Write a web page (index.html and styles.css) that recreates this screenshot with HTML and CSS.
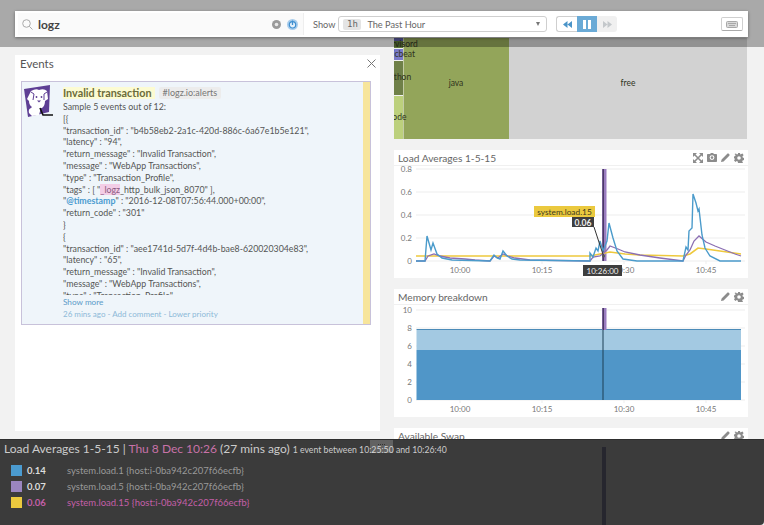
FILE: index.html
```html
<!DOCTYPE html>
<html lang="en">
<head>
  <meta charset="UTF-8" />
  <meta name="viewport" content="width=device-width, initial-scale=1.0"/>
  <title>Events - Load Averages</title>
  <link rel="stylesheet" href="styles.css">
</head>
<body>

  <svg class="defs" width="0" height="0">
    <symbol id="ic-expand" viewBox="0 0 10 10">
      <path d="M1 1l8 8M9 1L1 9" stroke="currentColor" stroke-width="1.6" fill="none"/>
      <path d="M0 0h4L0 4zM10 0v4L6 0zM0 10V6l4 4zM10 10H6l4-4z" fill="currentColor"/>
    </symbol>
    <symbol id="ic-camera" viewBox="0 0 10 9">
      <path fill-rule="evenodd" d="M3 1l1-1h2l1 1h2.2q.8 0 .8.8v6.4q0 .8-.8.8H.8Q0 9 0 8.200V1.800Q0 1 .8 1zM5 2.200a2.400 2.400 0 1 0 0 4.800 2.400 2.400 0 0 0 0-4.800z" fill="currentColor"/>
      <circle cx="5" cy="4.600" r="1.300" fill="currentColor"/>
    </symbol>
    <symbol id="ic-pencil" viewBox="0 0 9 9">
      <path d="M0 9l.6-2.600L6.300.7q.7-.7 1.400 0l.6.6q.7.7 0 1.400L2.600 8.400z" fill="currentColor"/>
    </symbol>
    <symbol id="ic-gear" viewBox="0 0 10 10">
      <path fill-rule="evenodd" d="M4 0h2l.3 1.500 1-.4 1.300-.5 1 1.700-1.100 1 .2 1.200 1.300.5v2l-1.400.4-.4 1 .8 1.300-1.500 1.200-1.200-.9-1 .4L6 10H4l-.3-1.500-1-.4-1.200.9L0 7.600l.8-1.300-.4-1L0 4.900V3.500l1.300-.5.200-1-1-1.100L1.900.6l1.100.8 1-.4zM5 3.200a1.800 1.800 0 1 0 0 3.600 1.800 1.800 0 0 0 0-3.600z" fill="currentColor"/>
    </symbol>
  </svg>

  <div class="page">

    <div class="columns">
      <div class="left-col">
        <div class="events-panel">
          <div class="events-head">
            <span>Events</span>
            <svg class="close-x" width="9" height="9" viewBox="0 0 9 9"><path d="M.5.5l8 8M8.500.5l-8 8" stroke="#777" fill="none"/></svg>
          </div>

          <div class="event-card">
            <svg class="dog-logo" width="32" height="34" viewBox="0 0 32 34">
              <path d="M1 4L27 0l-1 27-21 5z" fill="#5e3f94"/>
              <path d="M8 6q5-3 8-1 5-2 8 1l1 8-3 2q0 5-3 7l-1 0q-1 3-2 7l-7 1-3-3q-1-4 2-5l1-1q-3-2-3-6l-2-2z" fill="#fff"/>
              <path d="M8 7l3 2-1 6M24 7l-3 2 0 6" stroke="#5e3f94" fill="none"/>
              <circle cx="13.500" cy="12" r=".9" fill="#5e3f94"/>
              <circle cx="18.500" cy="12" r=".9" fill="#5e3f94"/>
              <path d="M14 15.500h4l-2 2z" fill="#5e3f94"/>
              <path d="M17 23l3 7h10" stroke="#111" stroke-width="1.600" fill="none"/>
            </svg>
            <div class="event-body">
              <div class="event-title">
                <span class="event-name">Invalid transaction</span>
                <span class="event-tag">#logz.io:alerts</span>
              </div>
              <div class="event-text">
                <div>Sample 5 events out of 12:</div>
                <div>[{</div>
                <div>"transaction_id" : "b4b58eb2-2a1c-420d-886c-6a67e1b5e121",</div>
                <div>"latency" : "94",</div>
                <div>"return_message" : "Invalid Transaction",</div>
                <div>"message" : "WebApp Transactions",</div>
                <div>"type" : "Transaction_Profile",</div>
                <div>"tags" : [ "<mark class="hl-pink">_logz</mark>_http_bulk_json_8070" ],</div>
                <div>"<b class="hl-blue">@timestamp</b>" : "2016-12-08T07:56:44.000+00:00",</div>
                <div>"return_code" : "301"</div>
                <div>}</div>
                <div>{</div>
                <div>"transaction_id" : "aee1741d-5d7f-4d4b-bae8-620020304e83",</div>
                <div>"latency" : "65",</div>
                <div>"return_message" : "Invalid Transaction",</div>
                <div>"message" : "WebApp Transactions",</div>
                <div>"type" : "Transaction_Profile",</div>
              </div>
              <div class="show-more">Show more</div>
              <div class="event-foot">26 mins ago - Add comment - Lower priority</div>
            </div>
            <div class="event-stripe"></div>
          </div>
        </div>
      </div>

      <div class="right-col">
        <svg class="treemap" width="354" height="101" viewBox="394 38 354 101">
          <rect x="394" y="38" width="9" height="3" fill="#5d5da8"/>
          <rect x="394" y="41" width="9" height="7" fill="#5f7a3c"/>
          <rect x="394" y="49" width="9" height="11" fill="#7a7ac8"/>
          <rect x="394" y="61" width="9" height="34" fill="#6f8048"/>
          <rect x="394" y="96" width="9" height="43" fill="#bcd07c"/>
          <rect x="403.500" y="38" width="105.500" height="101" fill="#93a55a"/>
          <rect x="509" y="38" width="238" height="101" fill="#d2d2d2"/>
          <text class="tm-label" x="396" y="47" text-anchor="middle">supervisord</text>
          <text class="tm-label" x="395" y="57" text-anchor="middle">metricbeat</text>
          <text class="tm-label" x="398" y="80" text-anchor="middle">python</text>
          <text class="tm-label" x="397" y="120" text-anchor="middle">node</text>
          <text class="tm-label" x="456" y="86" text-anchor="middle">java</text>
          <text class="tm-label" x="628" y="86" text-anchor="middle">free</text>
        </svg>

        <div class="widget">
          <div class="widget-head">
            <span>Load Averages 1-5-15</span>
            <div class="widget-icons">
              <svg width="10" height="10"><use href="#ic-expand"/></svg>
              <svg width="10" height="9"><use href="#ic-camera"/></svg>
              <svg width="9" height="9"><use href="#ic-pencil"/></svg>
              <svg width="10" height="10"><use href="#ic-gear"/></svg>
            </div>
          </div>
          <svg class="chart" width="354" height="112" viewBox="394 166 354 112">
            <g class="grid">
              <path d="M416 169H745M416 192H745M416 215H745M416 238H745M416 261H745"/>
              <path d="M460 261v3M542 261v3M624 261v3M706 261v3"/>
            </g>
            <text class="tick-y" x="412" y="172">0.8</text>
            <text class="tick-y" x="412" y="195">0.6</text>
            <text class="tick-y" x="412" y="218">0.4</text>
            <text class="tick-y" x="412" y="241">0.2</text>
            <text class="tick-y" x="412" y="264">0</text>
            <text class="tick-x" x="460" y="273">10:00</text>
            <text class="tick-x" x="542" y="273">10:15</text>
            <text class="tick-x" x="624" y="273">10:30</text>
            <text class="tick-x" x="706" y="273">10:45</text>
            <rect class="event-bar" x="602" y="169" width="4.500" height="92"/>
            <rect class="event-core" x="602.500" y="169" width="1.500" height="92"/>
            <polyline class="line-yellow" points="416,256 590,256 600,254 610,252 625,254 640,255 683,256 690,254 698,248 706,249 720,251 741,254"/>
            <polyline class="line-purple" points="416,261 425,261 428,256 434,254 440,256 450,258 465,259 475,260 490,261 494,256 498,258 503,254 508,256 515,258 530,260 590,261 593,257 600,256 607,250 610,246 618,249 625,252 640,255 660,258 683,261 686,255 690,250 694,241 699,236 706,242 715,246 725,250 735,254 741,256"/>
            <polyline class="line-blue" points="416,261 425,261 427,236 431,250 433,243 437,254 442,258 452,260 490,261 494,255 497,258 500,259 503,251 507,256 512,259 520,260 590,261 590,253 593,257 596,248 598,251 600,241 603,251 607,241 609,223 613,238 617,251 623,259 637,261 683,261 686,247 688,250 689,231 692,228 693,194 696,203 698,211 699,209 702,235 705,248 710,256 720,261 741,261"/>
            <path class="pointer" d="M594 227L603.500 256"/>
            <circle class="dot" cx="603.500" cy="256" r="1.500"/>
            <rect class="tip-yellow" x="534" y="206" width="61" height="11"/>
            <text class="tip-yellow-text" x="564.500" y="214.500">system.load.15</text>
            <rect class="tip-dark" x="572" y="217" width="22" height="10"/>
            <text class="tip-dark-text" x="583" y="225.500">0.06</text>
            <rect class="tip-dark" x="583" y="265" width="39" height="11"/>
            <text class="tip-dark-text tip-time" x="602.500" y="274">10:26:00</text>
          </svg>
        </div>

        <div class="widget">
          <div class="widget-head">
            <span>Memory breakdown</span>
            <div class="widget-icons">
              <svg width="9" height="9"><use href="#ic-pencil"/></svg>
              <svg width="10" height="10"><use href="#ic-gear"/></svg>
            </div>
          </div>
          <svg class="chart" width="354" height="112" viewBox="394 305 354 112">
            <g class="grid">
              <path d="M416 310H745M416 328H745M416 346H745M416 364H745M416 382H745M416 400H745"/>
              <path d="M460 400v3M542 400v3M624 400v3M706 400v3"/>
            </g>
            <text class="tick-y" x="412" y="313">10</text>
            <text class="tick-y" x="412" y="331">8</text>
            <text class="tick-y" x="412" y="349">6</text>
            <text class="tick-y" x="412" y="367">4</text>
            <text class="tick-y" x="412" y="385">2</text>
            <text class="tick-y" x="412" y="403">0</text>
            <text class="tick-x" x="460" y="412">10:00</text>
            <text class="tick-x" x="542" y="412">10:15</text>
            <text class="tick-x" x="624" y="412">10:30</text>
            <text class="tick-x" x="706" y="412">10:45</text>
            <rect x="416.500" y="330" width="324.500" height="20" fill="#a3c9e2"/>
            <rect x="416.500" y="350" width="324.500" height="50" fill="#5096c8"/>
            <path class="mem-line" d="M416.500 329.500H741"/>
            <rect class="event-bar" x="602" y="308" width="4.500" height="22"/>
            <rect class="event-core" x="602.500" y="308" width="1.500" height="22"/>
            <path class="mem-cursor" d="M603 330V400"/>
          </svg>
        </div>

        <div class="widget">
          <div class="widget-head">
            <span>Available Swap</span>
            <div class="widget-icons">
              <svg width="9" height="9"><use href="#ic-pencil"/></svg>
              <svg width="10" height="10"><use href="#ic-gear"/></svg>
            </div>
          </div>
        </div>
      </div>
    </div>

    <div class="top-shade">
      <div class="toolbar">
        <div class="search">
          <svg width="11" height="11" viewBox="0 0 11 11"><circle cx="4.500" cy="4.500" r="3.800" stroke="#aaa" fill="none"/><path d="M7.300 7.300L10.500 10.500" stroke="#aaa"/></svg>
          <span class="search-text">logz</span>
          <svg class="search-clear" width="9" height="9" viewBox="0 0 9 9"><circle cx="4.500" cy="4.500" r="4.500" fill="#9a9a9a"/><circle cx="4.500" cy="4.500" r="1.800" fill="#e8e8e8"/></svg>
          <svg width="11" height="11" viewBox="0 0 11 11"><circle cx="5.500" cy="5.500" r="5.500" fill="#a9cdec"/><circle cx="5.500" cy="5.800" r="3.200" stroke="#3f8fd0" stroke-width="1.200" fill="#e3f0fa"/><path d="M5.500 1.500V6" stroke="#3f8fd0" stroke-width="1.300"/></svg>
        </div>
        <div class="show-label">Show</div>
        <div class="range-select">
          <span class="range-chip">1h</span>
          <span class="range-text">The Past Hour</span>
          <span class="range-arrow"></span>
        </div>
        <div class="player">
          <div class="player-btn">
            <svg width="9" height="7" viewBox="0 0 9 7"><path d="M4.500 0v7L0 3.500zM9 0v7L4.500 3.500z" fill="#4b94c8"/></svg>
          </div>
          <div class="player-btn is-on">
            <svg width="8" height="9" viewBox="0 0 8 9"><path d="M0 0h3v9H0zM5 0h3v9H5z" fill="#fff"/></svg>
          </div>
          <div class="player-btn is-off">
            <svg width="9" height="7" viewBox="0 0 9 7"><path d="M0 0v7l4.500-3.500zM4.500 0v7L9 3.500z" fill="#c4c8cb"/></svg>
          </div>
        </div>
        <div class="kbd-btn">
          <svg width="12" height="7" viewBox="0 0 12 7"><rect x=".5" y=".5" width="11" height="6" rx="1" fill="#d8d8d8" stroke="#a8a8a8"/><path d="M2 2.500h8M3 4.500h6" stroke="#a8a8a8"/></svg>
        </div>
      </div>
    </div>

    <!-- hover legend docked at bottom -->
    <div class="legend-dock">
      <div class="dock-handle"></div>
      <div class="dock-cursor"></div>
      <div class="dock-title">
        Load Averages 1-5-15 | <span class="pink">Thu 8 Dec 10:26</span> (27 mins ago)
        <small>1 event between 10:25:50 and 10:26:40</small>
      </div>
      <div class="legend-rows">
        <div class="legend-row">
          <span class="swatch sw-blue"></span><b>0.14</b><span>system.load.1 {host:i-0ba942c207f66ecfb}</span>
        </div>
        <div class="legend-row">
          <span class="swatch sw-purple"></span><b>0.07</b><span>system.load.5 {host:i-0ba942c207f66ecfb}</span>
        </div>
        <div class="legend-row is-active">
          <span class="swatch sw-yellow"></span><b>0.06</b><span>system.load.15 {host:i-0ba942c207f66ecfb}</span>
        </div>
      </div>
    </div>

  </div>

</body>
</html>
```

FILE: styles.css
```css
* {
  box-sizing: border-box;
}
body {
  margin: 0;
  font-family: Lato, "Open Sans", sans-serif;
  color: #555;
}
.defs {
  position: absolute;
}
.page {
  position: relative;
  width: 764px;
  height: 525px;
  overflow: hidden;
  background: #f2f2f2;
}
.columns {
  display: flex;
  gap: 14px;
  padding: 38px 0 0 15px;
}
.left-col {
  width: 365px;
  padding-top: 17px;
}
.right-col {
  width: 354px;
  display: flex;
  flex-direction: column;
}
.treemap {
  display: block;
}
.tm-label {
  font: 8.5px Lato, sans-serif;
  fill: #2f3320;
}

/* events */
.events-panel {
  height: 376px;
  background: #fff;
  padding: 0 6px;
}
.events-head {
  height: 26px;
  padding-bottom: 10px;
  display: flex;
  align-items: center;
  justify-content: space-between;
  font-size: 11.5px;
  margin-left: -1px;
  color: #555;
}
.close-x {
  margin-right: -2px;
}
.event-card {
  position: relative;
  height: 244px;
  width: 350px;
  display: flex;
  background: #eff5fa;
  border: 1px solid #c8c2da;
}
.dog-logo {
  flex: none;
  margin: 3px 0 0 1px;
}
.event-body {
  margin-left: 8px;
  width: 290px;
  padding-top: 4px;
  font-size: 8.8px;
  color: #555;
}
.event-title {
  display: flex;
  align-items: center;
  gap: 4px;
  height: 13px;
}
.event-name {
  background: #fcfbd2;
  color: #6b6b3a;
  font-weight: 700;
  font-size: 10.8px;
  line-height: 12px;
  padding-right: 3px;
}
.event-tag {
  background: #ececec;
  color: #777;
  font-size: 9px;
  line-height: 12px;
  padding: 0 4px;
  border-radius: 2px;
}
.event-text {
  height: 194px;
  overflow: hidden;
  line-height: 11.8px;
  margin-top: 2px;
}
.hl-pink {
  background: #f3cde6;
  color: #8a5a80;
}
.hl-blue {
  color: #4a9bd0;
}
.show-more {
  color: #5b9bc8;
  font-size: 8.2px;
  line-height: 11px;
  margin-top: 2px;
}
.event-foot {
  color: #8db9d8;
  line-height: 11px;
  margin-top: 1px;
  font-size: 8px;
}
.event-stripe {
  position: absolute;
  right: 0;
  top: 0;
  bottom: 0;
  width: 7px;
  background: #f7e59b;
}

/* widgets */
.widget {
  margin-top: 11px;
  height: 128px;
  background: #fff;
}
.widget-head {
  height: 16px;
  padding: 0 4px;
  display: flex;
  align-items: center;
  justify-content: space-between;
  font-size: 10.2px;
  color: #666;
  border-bottom: 1px solid #f0f0f0;
}
.widget-icons {
  display: flex;
  align-items: center;
  gap: 4px;
  color: #8c8c8c;
}
.chart {
  display: block;
}
.grid path {
  stroke: #ededed;
  fill: none;
}
.tick-y {
  font: 8px Lato, sans-serif;
  fill: #777;
  text-anchor: end;
}
.tick-x {
  font: 8px Lato, sans-serif;
  fill: #777;
  text-anchor: middle;
}
.event-bar {
  fill: #9a7cc0;
}
.event-core {
  fill: #4b3a66;
}
.line-blue,
.line-purple,
.line-yellow {
  fill: none;
}
.line-blue {
  stroke: #4b9bcb;
  stroke-width: 1.4;
}
.line-purple {
  stroke: #8b6fb3;
  stroke-width: 1.3;
}
.line-yellow {
  stroke: #eec93e;
  stroke-width: 1.6;
}
.pointer {
  stroke: #333;
  fill: none;
}
.dot {
  fill: #555;
}
.tip-yellow {
  fill: #ebc93e;
}
.tip-yellow-text {
  font: 8.3px Lato, sans-serif;
  fill: #3c3a20;
  text-anchor: middle;
}
.tip-dark {
  fill: #3e3e3e;
}
.tip-dark-text {
  font: 700 8.5px Lato, sans-serif;
  fill: #eee;
  text-anchor: middle;
}
.tip-time {
  font-weight: 400;
  font-size: 8px;
}
.mem-line {
  stroke: #4b8bb8;
  stroke-width: 1.2;
  fill: none;
}
.mem-cursor {
  stroke: #1d3e55;
  fill: none;
}

/* top bar */
.top-shade {
  position: absolute;
  left: 0;
  top: 0;
  width: 100%;
  height: 47px;
  padding: 11px 16px 0 15px;
  background: rgba(0, 0, 0, .3);
}
.toolbar {
  height: 26px;
  display: flex;
  align-items: center;
  background: #fff;
  box-shadow: 0 1px 3px rgba(0, 0, 0, .4);
  font-size: 9.2px;
}
.search {
  width: 286px;
  height: 22px;
  margin-left: 3px;
  padding: 0 5px 0 4px;
  display: flex;
  align-items: center;
  background: #fafafa;
  border-right: 1px solid #eee;
}
.search-text {
  flex: 1;
  margin-left: 5px;
  font-size: 12px;
  font-weight: 700;
  color: #444;
}
.search-clear {
  margin-right: 6px;
}
.show-label {
  margin-left: 9px;
  color: #666;
}
.range-select {
  width: 209px;
  height: 16px;
  margin-left: 3px;
  padding: 0 4px;
  display: flex;
  align-items: center;
  border: 1px solid #cfcfcf;
  border-radius: 3px;
}
.range-chip {
  width: 18px;
  height: 11px;
  background: #e4e4e4;
  border-radius: 2px;
  text-align: center;
  line-height: 11px;
  font-size: 9px;
  font-family: "DejaVu Sans Mono", monospace;
  color: #666;
}
.range-text {
  flex: 1;
  margin-left: 6px;
  color: #666;
}
.range-arrow {
  width: 0;
  height: 0;
  margin-right: 2px;
  border: 2.5px solid transparent;
  border-top: 4px solid #777;
  border-bottom: 0;
}
.player {
  width: 61px;
  height: 16px;
  margin-left: 9px;
  display: flex;
}
.player-btn {
  flex: 1;
  display: flex;
  align-items: center;
  justify-content: center;
  border: 1px solid #cfcfcf;
  border-right: 0;
  border-radius: 3px 0 0 3px;
}
.player-btn.is-on {
  background: #6aaad6;
  border: 0;
  border-radius: 0;
}
.player-btn.is-off {
  background: #f0f0f0;
  border: 0;
  border-radius: 0 3px 3px 0;
}
.kbd-btn {
  width: 22px;
  height: 14px;
  margin-left: 104px;
  display: flex;
  align-items: center;
  justify-content: center;
  border: 1px solid #cfcfcf;
  border-bottom-color: #aaa;
  border-radius: 2px;
}

/* legend dock */
.legend-dock {
  position: absolute;
  left: 0;
  bottom: 0;
  width: 100%;
  height: 86px;
  background: #3b3b3b;
  border-top: 1px solid #2e2e2e;
  color: #ccc;
  border-bottom-right-radius: 4px;
}
.dock-handle {
  position: absolute;
  left: 370px;
  top: 0;
  width: 23px;
  height: 13px;
  background: rgba(255, 255, 255, .2);
}
.dock-handle::after {
  content: "";
  position: absolute;
  left: 8px;
  top: 4px;
  width: 7px;
  border-top: 1px dotted #333;
}
.dock-cursor {
  position: absolute;
  left: 602px;
  top: 7px;
  bottom: 0;
  width: 4px;
  background: #26262e;
}
.dock-title {
  padding: 1px 0 0 4px;
  font-size: 12px;
  line-height: 16px;
  white-space: nowrap;
}
.dock-title small {
  font-size: 8.7px;
}
.pink {
  color: #c872a8;
}
.legend-rows {
  margin-top: 4px;
  padding-left: 11px;
}
.legend-row {
  height: 16px;
  display: flex;
  align-items: center;
  font-size: 9.5px;
  color: #999;
}
.legend-row b {
  width: 40px;
  margin-left: 5px;
  color: #ddd;
}
.legend-row.is-active,
.legend-row.is-active b {
  color: #c45fa8;
}
.swatch {
  width: 11px;
  height: 11px;
}
.sw-blue {
  background: #4b9bd0;
}
.sw-purple {
  background: #9a85c0;
}
.sw-yellow {
  background: #ebc93e;
}
```
